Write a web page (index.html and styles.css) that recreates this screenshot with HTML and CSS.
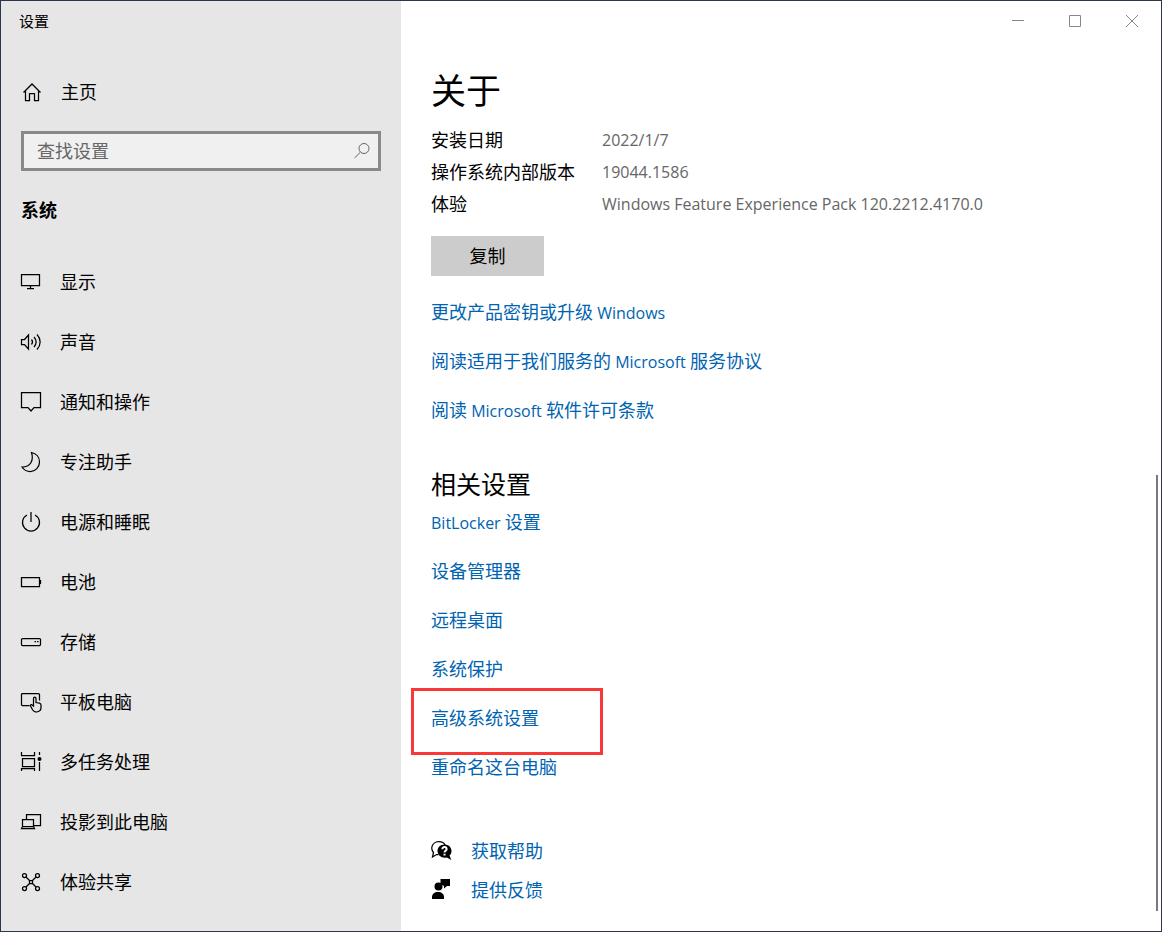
FILE: index.html
```html
<!DOCTYPE html>
<html lang="zh-CN">
<head>
<meta charset="utf-8">
<meta name="viewport" content="width=device-width, initial-scale=1">
<title>设置</title>
<link rel="stylesheet" href="styles.css">
</head>
<body>
<div class="window">
  <aside class="sidebar">
    <div class="app-title">设置</div>
    <a class="nav-link home" href="#">
      <svg class="icon" viewBox="0 0 22 22"><path d="M2.500 11.500 11 3l8.500 8.500M4.500 10v9.500h4v-7h5v7h4V10"/></svg>
      <span>主页</span>
    </a>
    <div class="search">
      <input class="search-input" type="search" placeholder="查找设置" aria-label="查找设置">
      <svg class="search-icon" viewBox="0 0 18 18"><circle cx="11" cy="6.500" r="5"/><path d="M7.400 10.200 1.500 16"/></svg>
    </div>
    <h2 class="group-title">系统</h2>
    <nav class="nav">
      <a class="nav-link" href="#"><svg class="icon" viewBox="0 0 22 22"><path d="M1.500 3.500h18v11h-18zM10.500 14.500v3M7 17.500h7"/></svg><span>显示</span></a>
      <a class="nav-link" href="#"><svg class="icon" viewBox="0 0 22 22"><path d="M1.500 8.500h3l4-4.500v14l-4-4.500h-3zM11.500 8.500c1.300 1.500 1.300 3.500 0 5M14 6c2.600 3 2.600 7 0 10M17 3.500c4.200 4.500 4.200 10.500 0 15"/></svg><span>声音</span></a>
      <a class="nav-link" href="#"><svg class="icon" viewBox="0 0 22 22"><path d="M1.500 1.500h19v15h-6.500l-3 3.500-3-3.500H1.500z"/></svg><span>通知和操作</span></a>
      <a class="nav-link" href="#"><svg class="icon" viewBox="0 0 22 22"><path d="M11.500 1.500c4.500 1 8 4.500 8 9.500 0 5-4 9.500-9 9.500-4 0-7-2-8.500-4.500 8.500 0 12-6.500 9.500-14.500z"/></svg><span>专注助手</span></a>
      <a class="nav-link" href="#"><svg class="icon" viewBox="0 0 22 22"><path d="M7 4a8.500 8.500 0 1 0 8 0M11 1v10"/></svg><span>电源和睡眠</span></a>
      <a class="nav-link" href="#"><svg class="icon" viewBox="0 0 22 22"><path d="M1.500 6.500h18v9h-18zM20.500 9v4"/></svg><span>电池</span></a>
      <a class="nav-link" href="#"><svg class="icon" viewBox="0 0 22 22"><rect x="1.500" y="7.500" width="19" height="7" rx="1"/><path d="M14.500 10.500h1.500M17 10.500h1.500"/></svg><span>存储</span></a>
      <a class="nav-link" href="#"><svg class="icon" viewBox="0 0 22 22"><path d="M9.500 14.500h-7a1 1 0 0 1-1-1v-10a1 1 0 0 1 1-1h16a1 1 0 0 1 1 1v6M13.500 15V7.500q0-1.500 1.250-1.500t1.250 1.500v4l3.500.6q1.500.4 1.500 2v2.400q0 4-4.500 4.500-2.500 0-3.800-2l-2.200-4q-.4-1.500 1-1.300z"/></svg><span>平板电脑</span></a>
      <a class="nav-link" href="#"><svg class="icon" viewBox="0 0 22 22"><path d="M1.500 1v3.500h13V1M2.500 7.500h12v8h-12zM1.500 20v-2.500h13V20M19.500 1v3M19.500 11v9"/><circle class="fill" cx="19.500" cy="8" r="2"/></svg><span>多任务处理</span></a>
      <a class="nav-link" href="#"><svg class="icon" viewBox="0 0 22 22"><path d="M6.500 8.500v-5h14v11h-7M2.500 8.500h11v7h-11zM1.500 17.500h13l-1-2h-11z"/></svg><span>投影到此电脑</span></a>
      <a class="nav-link" href="#"><svg class="icon" viewBox="0 0 22 22"><circle cx="4.500" cy="4.500" r="2"/><circle cx="17.500" cy="4.500" r="2"/><circle cx="4.500" cy="17.500" r="2"/><circle cx="17.500" cy="17.500" r="2"/><path d="m6 6 3.500 3.500M16 6l-3.500 3.500M6 16l3.500-3.500M16 16l-3.500-3.500M9.500 9.500h3v3h-3z"/></svg><span>体验共享</span></a>
    </nav>
  </aside>
  <main class="content">
    <div class="controls">
      <button class="control" aria-label="最小化"><svg viewBox="0 0 14 14"><path d="M1 6.500h12"/></svg></button>
      <button class="control" aria-label="最大化"><svg viewBox="0 0 14 14"><path d="M1.500 1.500h11v11h-11z"/></svg></button>
      <button class="control" aria-label="关闭"><svg viewBox="0 0 14 14"><path d="m1 1 12 12M13 1 1 13"/></svg></button>
    </div>
    <div class="page">
      <h1 class="page-title">关于</h1>
      <dl class="specs">
        <dt>安装日期</dt><dd>2022/1/7</dd>
        <dt>操作系统内部版本</dt><dd>19044.1586</dd>
        <dt>体验</dt><dd>Windows Feature Experience Pack 120.2212.4170.0</dd>
      </dl>
      <button class="copy">复制</button>
      <ul class="links">
        <li><a href="#">更改产品密钥或升级<span class="latin"> Windows</span></a></li>
        <li><a href="#">阅读适用于我们服务的<span class="latin"> Microsoft </span>服务协议</a></li>
        <li><a href="#">阅读<span class="latin"> Microsoft </span>软件许可条款</a></li>
      </ul>
      <h2 class="section-title">相关设置</h2>
      <ul class="links">
        <li><a href="#"><span class="latin">BitLocker </span>设置</a></li>
        <li><a href="#">设备管理器</a></li>
        <li><a href="#">远程桌面</a></li>
        <li><a href="#">系统保护</a></li>
        <li class="marked"><a href="#">高级系统设置</a></li>
        <li><a href="#">重命名这台电脑</a></li>
      </ul>
      <div class="support">
        <a href="#"><svg class="support-icon" viewBox="0 0 22 22"><path class="line" d="M7.500 14.500H5.500L1.500 17l1-4.500C1.200 11 .6 9.300.8 7.500 1.300 4 4.300 1.500 7.800 1.500c3 0 5.400 1.300 6.400 3.500"/><path d="M13.500 4.500c4 0 7 2.800 7 6.500 0 2-.8 3.500-2 4.600l1.800 4.400-4.500-2.500c-5.300 1-9.300-2.300-9.300-6.500 0-3.700 3-6.500 7-6.500z"/><path class="cut" d="M11.400 9.200c0-3 4.200-2.600 4.200 0 0 1.600-2.100 1.600-2.100 3.300M13.500 13.800v1.600"/></svg><span>获取帮助</span></a>
        <a href="#"><svg class="support-icon" viewBox="0 0 22 22"><path d="M9.500 0h9.500v7h-3l-3 2.500V7l-3.500-2z"/><circle cx="7.500" cy="7.500" r="4"/><path d="M1 20v-2c0-3 2.500-5 6-5s6 2 6 5v2z"/></svg><span>提供反馈</span></a>
      </div>
    </div>
    <div class="scrollbar"></div>
  </main>
</div>
</body>
</html>
```

FILE: styles.css
```css
*, *::before, *::after { box-sizing: border-box; }

body {
  margin: 0;
  font: 18px/24px "Open Sans", "Noto Sans CJK SC", sans-serif;
  color: #000;
}

a { color: inherit; text-decoration: none; }
button, input { font: inherit; }
h1, h2, dl, dd, ul { margin: 0; padding: 0; font-weight: 400; }
svg { flex: none; fill: none; stroke: currentColor; }

.window {
  display: flex;
  min-height: 100vh;
  border: 1px solid #2c384a;
  background: #fff;
}

/* Sidebar */
.sidebar {
  flex: none;
  width: 400px;
  padding: 8px 20px 0 18px;
  background: #e6e6e6;
}

.app-title { font-size: 15px; }

.nav-link {
  display: flex;
  align-items: center;
  gap: 18px;
  height: 60px;
}

.icon { width: 22px; height: 22px; stroke-width: 1.25; }
.icon .fill { fill: currentColor; stroke: none; }

.home { margin: 29px 0 0 2px; }

.search {
  display: flex;
  align-items: center;
  gap: 8px;
  height: 40px;
  margin: 9px 0 0 2px;
  padding: 0 7px 0 13px;
  border: 3px solid #898989;
  background: #f0f0f0;
}

.search-input {
  flex: 1;
  min-width: 0;
  padding: 0;
  border: 0;
  outline: 0;
  background: transparent;
}

.search-input::placeholder { color: #666; opacity: 1; }
.search-icon { width: 18px; height: 18px; color: #666; }

.group-title {
  margin: 27px 0 0 2px;
  font-size: 18px;
  font-weight: 700;
}

.nav { margin: 30px 0 0 1px; }

/* Content */
.content {
  position: relative;
  flex: 1;
  min-width: 0;
}

.controls { display: flex; justify-content: flex-end; padding-right: 1px; }

.control {
  display: grid;
  place-items: center;
  width: 57px;
  height: 40px;
  padding: 0;
  border: 0;
  background: none;
  color: #888;
}

.control svg { width: 14px; height: 14px; }

.page { padding: 24px 30px 16px; }

.page-title { font-size: 35px; line-height: 52px; }

.specs {
  display: grid;
  grid-template-columns: 171px 1fr;
  margin-top: 7px;
  line-height: 32px;
}

.specs dd { font-size: 16px; color: #666; }

.copy {
  display: block;
  width: 113px;
  height: 40px;
  margin-top: 16px;
  padding: 0;
  border: 0;
  background: #ccc;
}

.links { margin-top: 12px; list-style: none; color: #0063b1; }
.links li { position: relative; height: 49px; line-height: 49px; }
.latin { font-size: 16px; }

.section-title {
  margin-top: 29px;
  font-size: 25px;
  line-height: 40px;
}

.section-title + .links { margin-top: -6px; }

/* Highlight frame around one link */
.marked::after {
  content: "";
  position: absolute;
  top: -6px;
  left: -20px;
  width: 192px;
  height: 67px;
  border: 3px solid #fb3838;
  pointer-events: none;
}

.support { margin-top: 39px; color: #0063b1; }

.support a {
  display: flex;
  align-items: center;
  gap: 18px;
  height: 39px;
}

.support-icon { width: 22px; height: 22px; color: #000; fill: #000; stroke: none; }
.support-icon .line { fill: none; stroke: #000; stroke-width: 1.25; }
.support-icon .cut { fill: none; stroke: #fff; stroke-width: 2; }

.scrollbar {
  position: absolute;
  top: 51%;
  right: 3px;
  bottom: 20px;
  width: 2px;
  background: #7a7a7a;
}
```
